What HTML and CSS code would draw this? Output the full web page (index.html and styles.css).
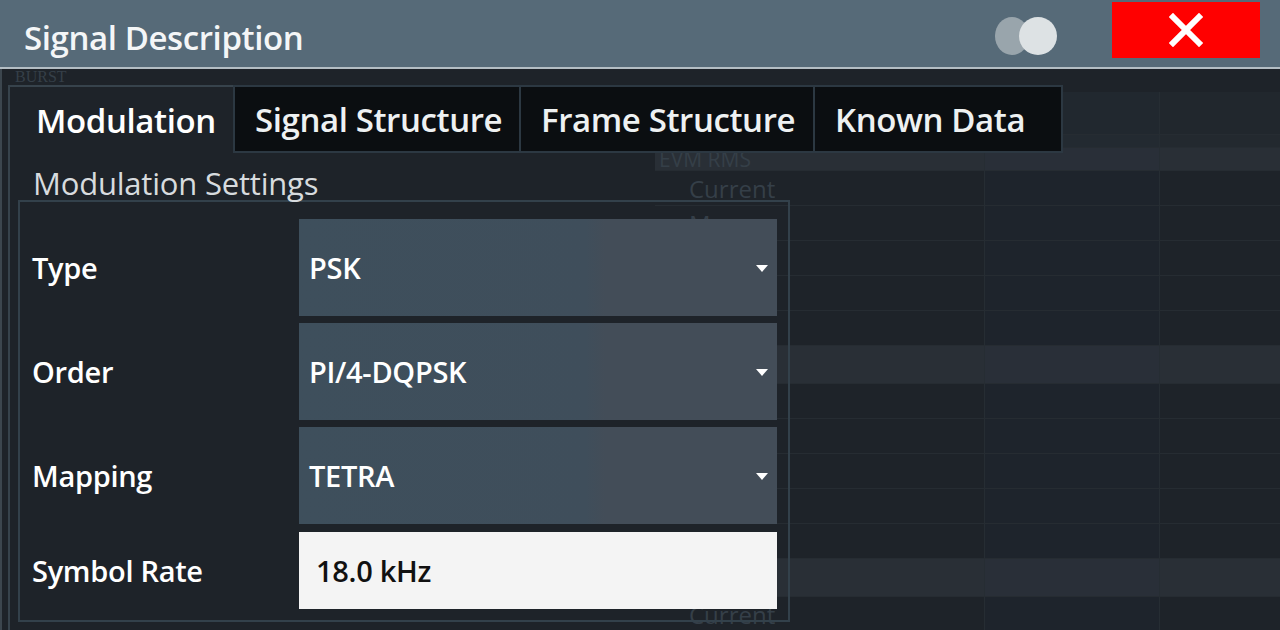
FILE: index.html
```html
<!DOCTYPE html>
<html lang="en">

<head>
  <meta name="viewport" content="width=device-width, initial-scale=1.0" />
  <title>Signal Description</title>
  <link rel="stylesheet" href="styles.css">
</head>

<body>
  <div class="dialog">
    <div class="titlebar">
      <span class="title">Signal Description</span>
      <svg class="toggle" width="64" height="40" viewBox="0 0 64 40">
        <ellipse cx="18" cy="20" rx="17" ry="19" fill="#99a5ac" />
        <ellipse cx="44" cy="20" rx="19" ry="19" fill="#dde2e4" />
      </svg>
      <div class="close">
        <svg width="34" height="34" viewBox="0 0 34 34">
          <path d="M4 4 L30 30 M30 4 L4 30" stroke="#fff" stroke-width="6" stroke-linecap="square" />
        </svg>
      </div>
    </div>

    <div class="content">
      <!-- faint measurement window behind the dialog -->
      <div class="ghost">
        <span class="ghost-text burst">BURST</span>
        <div class="ghost-table">
          <div class="grow top"><div></div><div></div><div></div></div>
          <div class="grow head"><div></div><div></div><div></div></div>
          <div class="grow band"><div><span class="ghost-text evm">EVM RMS</span></div><div></div><div></div></div>
          <div class="grow"><div><span class="ghost-text sub">Current</span></div><div></div><div></div></div>
          <div class="grow"><div><span class="ghost-text sub">Max</span></div><div></div><div></div></div>
          <div class="grow"><div></div><div></div><div></div></div>
          <div class="grow"><div></div><div></div><div></div></div>
          <div class="grow"><div></div><div></div><div></div></div>
          <div class="grow band tall"><div></div><div></div><div></div></div>
          <div class="grow"><div></div><div></div><div></div></div>
          <div class="grow"><div></div><div></div><div></div></div>
          <div class="grow"><div></div><div></div><div></div></div>
          <div class="grow"><div></div><div></div><div></div></div>
          <div class="grow"><div></div><div></div><div></div></div>
          <div class="grow band tall"><div></div><div></div><div></div></div>
          <div class="grow"><div><span class="ghost-text sub">Current</span></div><div></div><div></div></div>
        </div>
      </div>

      <div class="tabs">
        <div class="tab active">Modulation</div>
        <div class="tab w1">Signal Structure</div>
        <div class="tab w2">Frame Structure</div>
        <div class="tab w3">Known Data</div>
      </div>

      <div class="panel">
        <div class="section-title">Modulation Settings</div>
        <div class="group">
          <div class="row">
            <span class="label">Type</span>
            <div class="field select">PSK<span class="arrow"></span></div>
          </div>
          <div class="row">
            <span class="label">Order</span>
            <div class="field select">PI/4-DQPSK<span class="arrow"></span></div>
          </div>
          <div class="row">
            <span class="label">Mapping</span>
            <div class="field select">TETRA<span class="arrow"></span></div>
          </div>
          <div class="row short">
            <span class="label">Symbol Rate</span>
            <div class="field input">18.0 kHz</div>
          </div>
        </div>
      </div>
    </div>
  </div>
</body>

</html>
```

FILE: styles.css
```css
* {
  padding: 0;
  margin: 0;
  box-sizing: border-box;
}

body {
  width: 1280px;
  height: 630px;
  overflow: hidden;
  background-color: #1e2329;
  font-family: "Open Sans", "Noto Sans", sans-serif;
  color: #fff;
}

.dialog {
  display: flex;
  flex-direction: column;
  height: 630px;
}

.titlebar {
  flex-shrink: 0;
  height: 69px;
  display: flex;
  align-items: center;
  padding-left: 24px;
  background-color: #566a78;
  border-bottom: 2px solid #b4bec4;
}

.title {
  font-size: 33px;
  font-weight: 600;
  letter-spacing: -0.4px;
  color: #f4f6f7;
  margin-top: 8px;
}

.toggle {
  margin-left: auto;
  margin-top: 4px;
}

.close {
  align-self: flex-start;
  margin: 2px 20px 0 54px;
  width: 148px;
  height: 56px;
  background-color: #ff0000;
  display: grid;
  place-items: center;
}

.content {
  position: relative;
  flex: 1;
  min-height: 0;
  overflow: hidden;
  border-left: 2px solid #3c464e;
}

/* background window */
.ghost {
  position: absolute;
  inset: 0;
  z-index: 0;
  overflow: hidden;
}

.ghost-text {
  color: #353f48;
  font-size: 24px;
  font-weight: 400;
  white-space: nowrap;
}

.burst {
  position: absolute;
  left: 13px;
  top: 0;
  line-height: 16px;
  font-family: "Liberation Serif", serif;
  font-size: 16px;
}

.ghost-table {
  position: absolute;
  left: 653px;
  top: 23px;
  width: 627px;
}

.grow {
  display: grid;
  grid-template-columns: 330px 175px 1fr;
  height: 35px;
  border-bottom: 1px solid #262c32;
}

.grow div {
  border-right: 1px solid #262d33;
}

.grow div:nth-child(2) {
  background-color: rgba(40, 60, 80, 0.07);
}

.grow.top {
  height: 43px;
  background-color: #21272d;
}

.grow.head {
  height: 13px;
  background-color: #23292f;
}

.grow.band {
  height: 23px;
  background-color: #292f36;
}

.grow.band.tall {
  height: 38px;
}

.evm {
  display: block;
  margin-left: 4px;
  font-size: 21px;
  line-height: 22px;
}

.sub {
  display: block;
  margin-left: 34px;
  margin-top: 4px;
  line-height: 28px;
}

/* tabs */
.tabs {
  position: relative;
  z-index: 1;
  display: flex;
  margin-top: 16px;
  padding-left: 6px;
  height: 68px;
}

.tab {
  height: 68px;
  display: flex;
  align-items: center;
  padding-left: 20px;
  font-size: 33px;
  font-weight: 600;
  letter-spacing: -0.4px;
  color: #eef1f2;
  background-color: #0b0e11;
  border: 2px solid #2c3842;
  white-space: nowrap;
}

.tab.active {
  width: 225px;
  padding-left: 26px;
  background-color: #1e2329;
  color: #fff;
  border: none;
  border-top: 2px solid #37434c;
  border-left: 2px solid #37434c;
}

.tab.w1 {
  width: 288px;
}

.tab.w2 {
  width: 294px;
  border-left: none;
}

.tab.w3 {
  width: 248px;
  border-left: none;
}

.panel {
  position: relative;
  z-index: 1;
  margin-left: 6px;
  border-left: 2px solid #37434c;
  height: 477px;
}

.section-title {
  padding-left: 23px;
  font-size: 31px;
  font-weight: 400;
  letter-spacing: -0.2px;
  line-height: 36px;
  padding-top: 12px;
  color: #d7dbde;
  white-space: nowrap;
}

.group {
  margin-left: 8px;
  margin-top: -1px;
  width: 772px;
  height: 422px;
  border: 2px solid #33414b;
  padding: 17px 11px 0 12px;
  display: flex;
  flex-direction: column;
  gap: 7px;
}

.row {
  display: flex;
  align-items: center;
  height: 97px;
}

.row.short {
  height: 77px;
  margin-top: 1px;
}

.label {
  width: 267px;
  font-size: 29px;
  font-weight: 600;
  letter-spacing: -0.3px;
  color: #fff;
  white-space: nowrap;
}

.field {
  position: relative;
  flex: 1;
  height: 100%;
  display: flex;
  align-items: center;
  font-size: 29px;
  font-weight: 600;
  letter-spacing: -0.3px;
  white-space: nowrap;
}

.select {
  padding-left: 10px;
  background: linear-gradient(90deg, #3e4f5c 0%, #3f4e5b 60%, #434d58 64%, #434d58 100%);
  color: #fff;
}

.arrow {
  position: absolute;
  right: 9px;
  top: 46px;
  border-left: 6px solid transparent;
  border-right: 6px solid transparent;
  border-top: 7px solid #fff;
}

.input {
  padding-left: 17px;
  background-color: #f4f4f4;
  color: #111;
}
```
